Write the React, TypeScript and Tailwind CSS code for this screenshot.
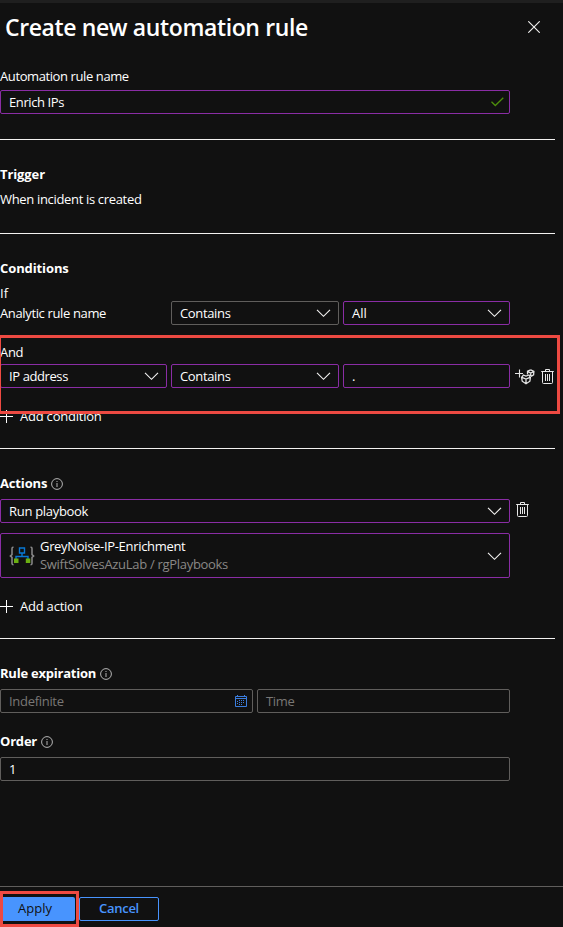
import React from 'react';

function Chevron() {
  return (
    <svg className="mr-[7px] shrink-0" width="15" height="24" viewBox="0 0 15 24" fill="none" stroke="#f3f2f1" strokeWidth="1.15">
      <path d="M1 8.8 L7.5 15.3 L14 8.8" />
    </svg>
  );
}

function Trash() {
  return (
    <svg className="shrink-0" width="13" height="16" viewBox="0 0 13 16" fill="none" stroke="#e8e8e8" strokeWidth="1">
      <path d="M0.2 2.5 H12.8 M4.5 2.5 V0.5 H8.5 V2.5 M1.5 2.5 V13.5 Q1.5 14.5 2.5 14.5 H10.5 Q11.5 14.5 11.5 13.5 V2.5 M4.5 5 V12 M6.5 5 V12 M8.5 5 V12" />
    </svg>
  );
}

function Info() {
  return (
    <svg className="ml-1 mt-[2px] shrink-0" width="12" height="12" viewBox="0 0 12 12" fill="none" stroke="#b4b4b4" strokeWidth="1">
      <circle cx="6" cy="6" r="5.4" />
      <path d="M6 5 V9 M6 3 V4" />
    </svg>
  );
}

function Plus() {
  return (
    <svg className="mr-[7px] shrink-0" width="13" height="13" viewBox="0 0 13 13" stroke="#ffffff" strokeWidth="1">
      <path d="M0 6.5 H13 M6.5 0 V13" />
    </svg>
  );
}

function AddEntity() {
  return (
    <svg className="shrink-0" width="20" height="17" viewBox="0 0 20 17" fill="none" stroke="#e4e4e4" strokeWidth="1.3">
      <path d="M0 4.5 H8 M4.5 0.5 V8.5" strokeWidth="1.1" />
      <path d="M8.4 6 L11 7 L14 6 L15.4 8.4 L14.9 12.2 L11 14.8 L7.2 12.2 L6.6 8.4 Z M7 8.4 L11 10 L15 8.4 M11 10 V14.4" />
      <path d="M15.7 0.9 L18.9 2.3 L18.6 5.9 L16 7.5 M15.7 0.9 L12.5 2.3 L12.5 5.4 M12.8 2.6 L15.7 4 L18.7 2.6 M15.7 4 V7" />
    </svg>
  );
}

function Rule({ className }: { className: string }) {
  return <div className={`h-px w-[555px] bg-[#f3f2f1] ${className}`} />;
}

function Field({ className, children }: { className: string; children?: React.ReactNode }) {
  return (
    <div className={`flex shrink-0 items-center justify-between rounded-[2px] border pl-2 ${className}`}>
      {children}
    </div>
  );
}

export default function App() {
  return (
    <div className="flex h-[927px] w-[563px] flex-col overflow-hidden bg-[#111111] font-['Open_Sans','Noto_Sans',sans-serif] text-[13px] leading-[20px] text-white">
      <div className="h-[3px] bg-[#1f1f1f]" />
      <header className="flex h-[63px] items-start justify-between pl-[5px] pr-[23px]">
        <h1 className="mt-[8px] whitespace-nowrap text-[23px] font-semibold leading-[32px] tracking-[-0.38px]">Create new automation rule</h1>
        <svg className="mt-[18px]" width="12" height="12" viewBox="0 0 12 12" stroke="#f3f2f1" strokeWidth="1.1">
          <path d="M0.3 0.3 L11.7 11.7 M11.7 0.3 L0.3 11.7" />
        </svg>
      </header>

      <label className="h-5 tracking-[-0.4px]">Automation rule name</label>
      <Field className="mt-1 h-6 w-[510px] border-[#8a2da5]">
        <span className="tracking-[-0.4px]">Enrich IPs</span>
        <svg className="mr-[5px]" width="13" height="10" viewBox="0 0 13 10" fill="none" stroke="#4e8f0c" strokeWidth="1.3">
          <path d="M0.5 4.7 L4.3 8.5 L12.3 0.8" />
        </svg>
      </Field>
      <Rule className="mt-[25px]" />

      <h2 className="mt-6 h-5 font-bold tracking-[-0.1px]">Trigger</h2>
      <p className="mt-[5px] h-5 tracking-[-0.33px]">When incident is created</p>
      <Rule className="mt-6" />

      <h2 className="mt-6 h-5 font-bold tracking-[-0.1px]">Conditions</h2>
      <p className="mt-[7px] h-4 leading-[16px]">If</p>
      <div className="flex items-center gap-1">
        <span className="w-[167px] tracking-[-0.36px]">Analytic rule name</span>
        <Field className="h-6 w-[168px] border-[#605e5c]"><span className="tracking-[-0.35px]">Contains</span><Chevron /></Field>
        <Field className="h-6 w-[167px] border-[#8a2da5]"><span>All</span><Chevron /></Field>
      </div>

      <div className="relative pt-[17px]">
        <p className="h-5 tracking-[-0.3px]">And</p>
        <div className="mt-[2px] flex items-center gap-1">
          <Field className="h-6 w-[167px] border-[#8a2da5]"><span className="tracking-[-0.4px]">IP address</span><Chevron /></Field>
          <Field className="h-6 w-[168px] border-[#8a2da5]"><span className="tracking-[-0.35px]">Contains</span><Chevron /></Field>
          <Field className="h-6 w-[167px] border-[#8a2da5]"><span>.</span></Field>
          <div className="ml-px flex items-center gap-[6px] pt-[2px]"><AddEntity /><Trash /></div>
        </div>
        <div className="mt-[18px] flex h-5 items-center">
          <Plus /><span className="tracking-[-0.22px]">Add condition</span>
        </div>
        <div className="absolute -left-[2px] top-[10px] h-[79px] w-[562px] border-[3px] border-[#ee4a42]" />
      </div>
      <Rule className="mt-[22px]" />

      <div className="mt-6 flex h-5 items-center">
        <h2 className="font-bold tracking-[-0.15px]">Actions</h2><Info />
      </div>
      <div className="mt-[6px] flex h-6 items-center">
        <Field className="h-6 w-[510px] border-[#8a2da5]"><span className="tracking-[-0.3px]">Run playbook</span><Chevron /></Field>
        <div className="-mt-[2px] ml-[6px]"><Trash /></div>
      </div>
      <Field className="mt-[10px] h-[45px] w-[510px] border-[#8a2da5]">
        <div className="flex items-center">
          <svg width="26" height="22" viewBox="0 0 26 22" fill="none">
            <path d="M4.5 2.2 H4 Q3 2.2 3 3.6 V9.6 L1.4 11 L3 12.4 V18.4 Q3 19.8 4.5 19.8 M21.5 2.2 H22 Q23 2.2 23 3.6 V9.6 L24.6 11 L23 12.4 V18.4 Q23 19.8 21.5 19.8" stroke="#8c8c8c" strokeWidth="1.5" />
            <path d="M10.5 3 H15.5 V8 H10.5 Z M13 8 V11.5 M7 14 V11.5 H19 V14" stroke="#0878d4" strokeWidth="1.4" />
            <path d="M5 13.5 H9.5 V18 H5 Z M16.8 13.5 H21.3 V18 H16.8 Z" fill="#6bb012" />
          </svg>
          <div className="-mt-px ml-[5px] flex flex-col leading-[18px]">
            <span className="tracking-[-0.32px]">GreyNoise-IP-Enrichment</span>
            <span className="tracking-[-0.3px] text-[#8a8886]">SwiftSolvesAzuLab / rgPlaybooks</span>
          </div>
        </div>
        <Chevron />
      </Field>
      <div className="mt-[18px] flex h-5 items-center">
        <Plus /><span className="tracking-[-0.22px]">Add action</span>
      </div>
      <Rule className="mt-[22px]" />

      <div className="mt-6 flex h-5 items-center">
        <h2 className="font-bold tracking-[-0.23px]">Rule expiration</h2><Info />
      </div>
      <div className="mt-[6px] flex gap-1 text-[#797775]">
        <Field className="h-6 w-[253px] border-[#605e5c]">
          <span className="tracking-[-0.3px]">Indefinite</span>
          <svg className="mr-[5px]" width="12" height="12" viewBox="0 0 12 12" fill="none" stroke="#3b7ddd">
            <path d="M0.5 1.5 H11.5 V11.5 H0.5 Z M0.5 3.5 H11.5 M2.5 0 V2 M9.5 0 V2" />
            <path d="M2.5 6 V10 M4.5 5 V10 M6.5 5 V10 M8.5 5 V9" strokeDasharray="1 1" />
          </svg>
        </Field>
        <Field className="h-6 w-[253px] border-[#605e5c]"><span className="tracking-[-0.35px]">Time</span></Field>
      </div>

      <div className="mt-[18px] flex h-5 items-center">
        <h2 className="font-bold tracking-[-0.2px]">Order</h2><Info />
      </div>
      <Field className="mt-[6px] h-6 w-[510px] border-[#605e5c]"><span>1</span></Field>

      <footer className="relative mt-auto flex h-[41px] gap-1 border-t border-[#605e5c] pt-[10px]">
        <button className="h-6 w-[75px] rounded-[2px] bg-[#4894fe] pb-[2px] pr-[5px] leading-[20px] text-[#111111]">Apply</button>
        <button className="h-6 w-20 rounded-[2px] border border-[#4894fe] pb-[2px] font-semibold leading-[20px] tracking-[-0.3px] text-[#4894fe]">Cancel</button>
        <div className="absolute left-0 top-[4px] h-[36px] w-[79px] border-[3px] border-[#ee4a42]" />
      </footer>
    </div>
  );
}
